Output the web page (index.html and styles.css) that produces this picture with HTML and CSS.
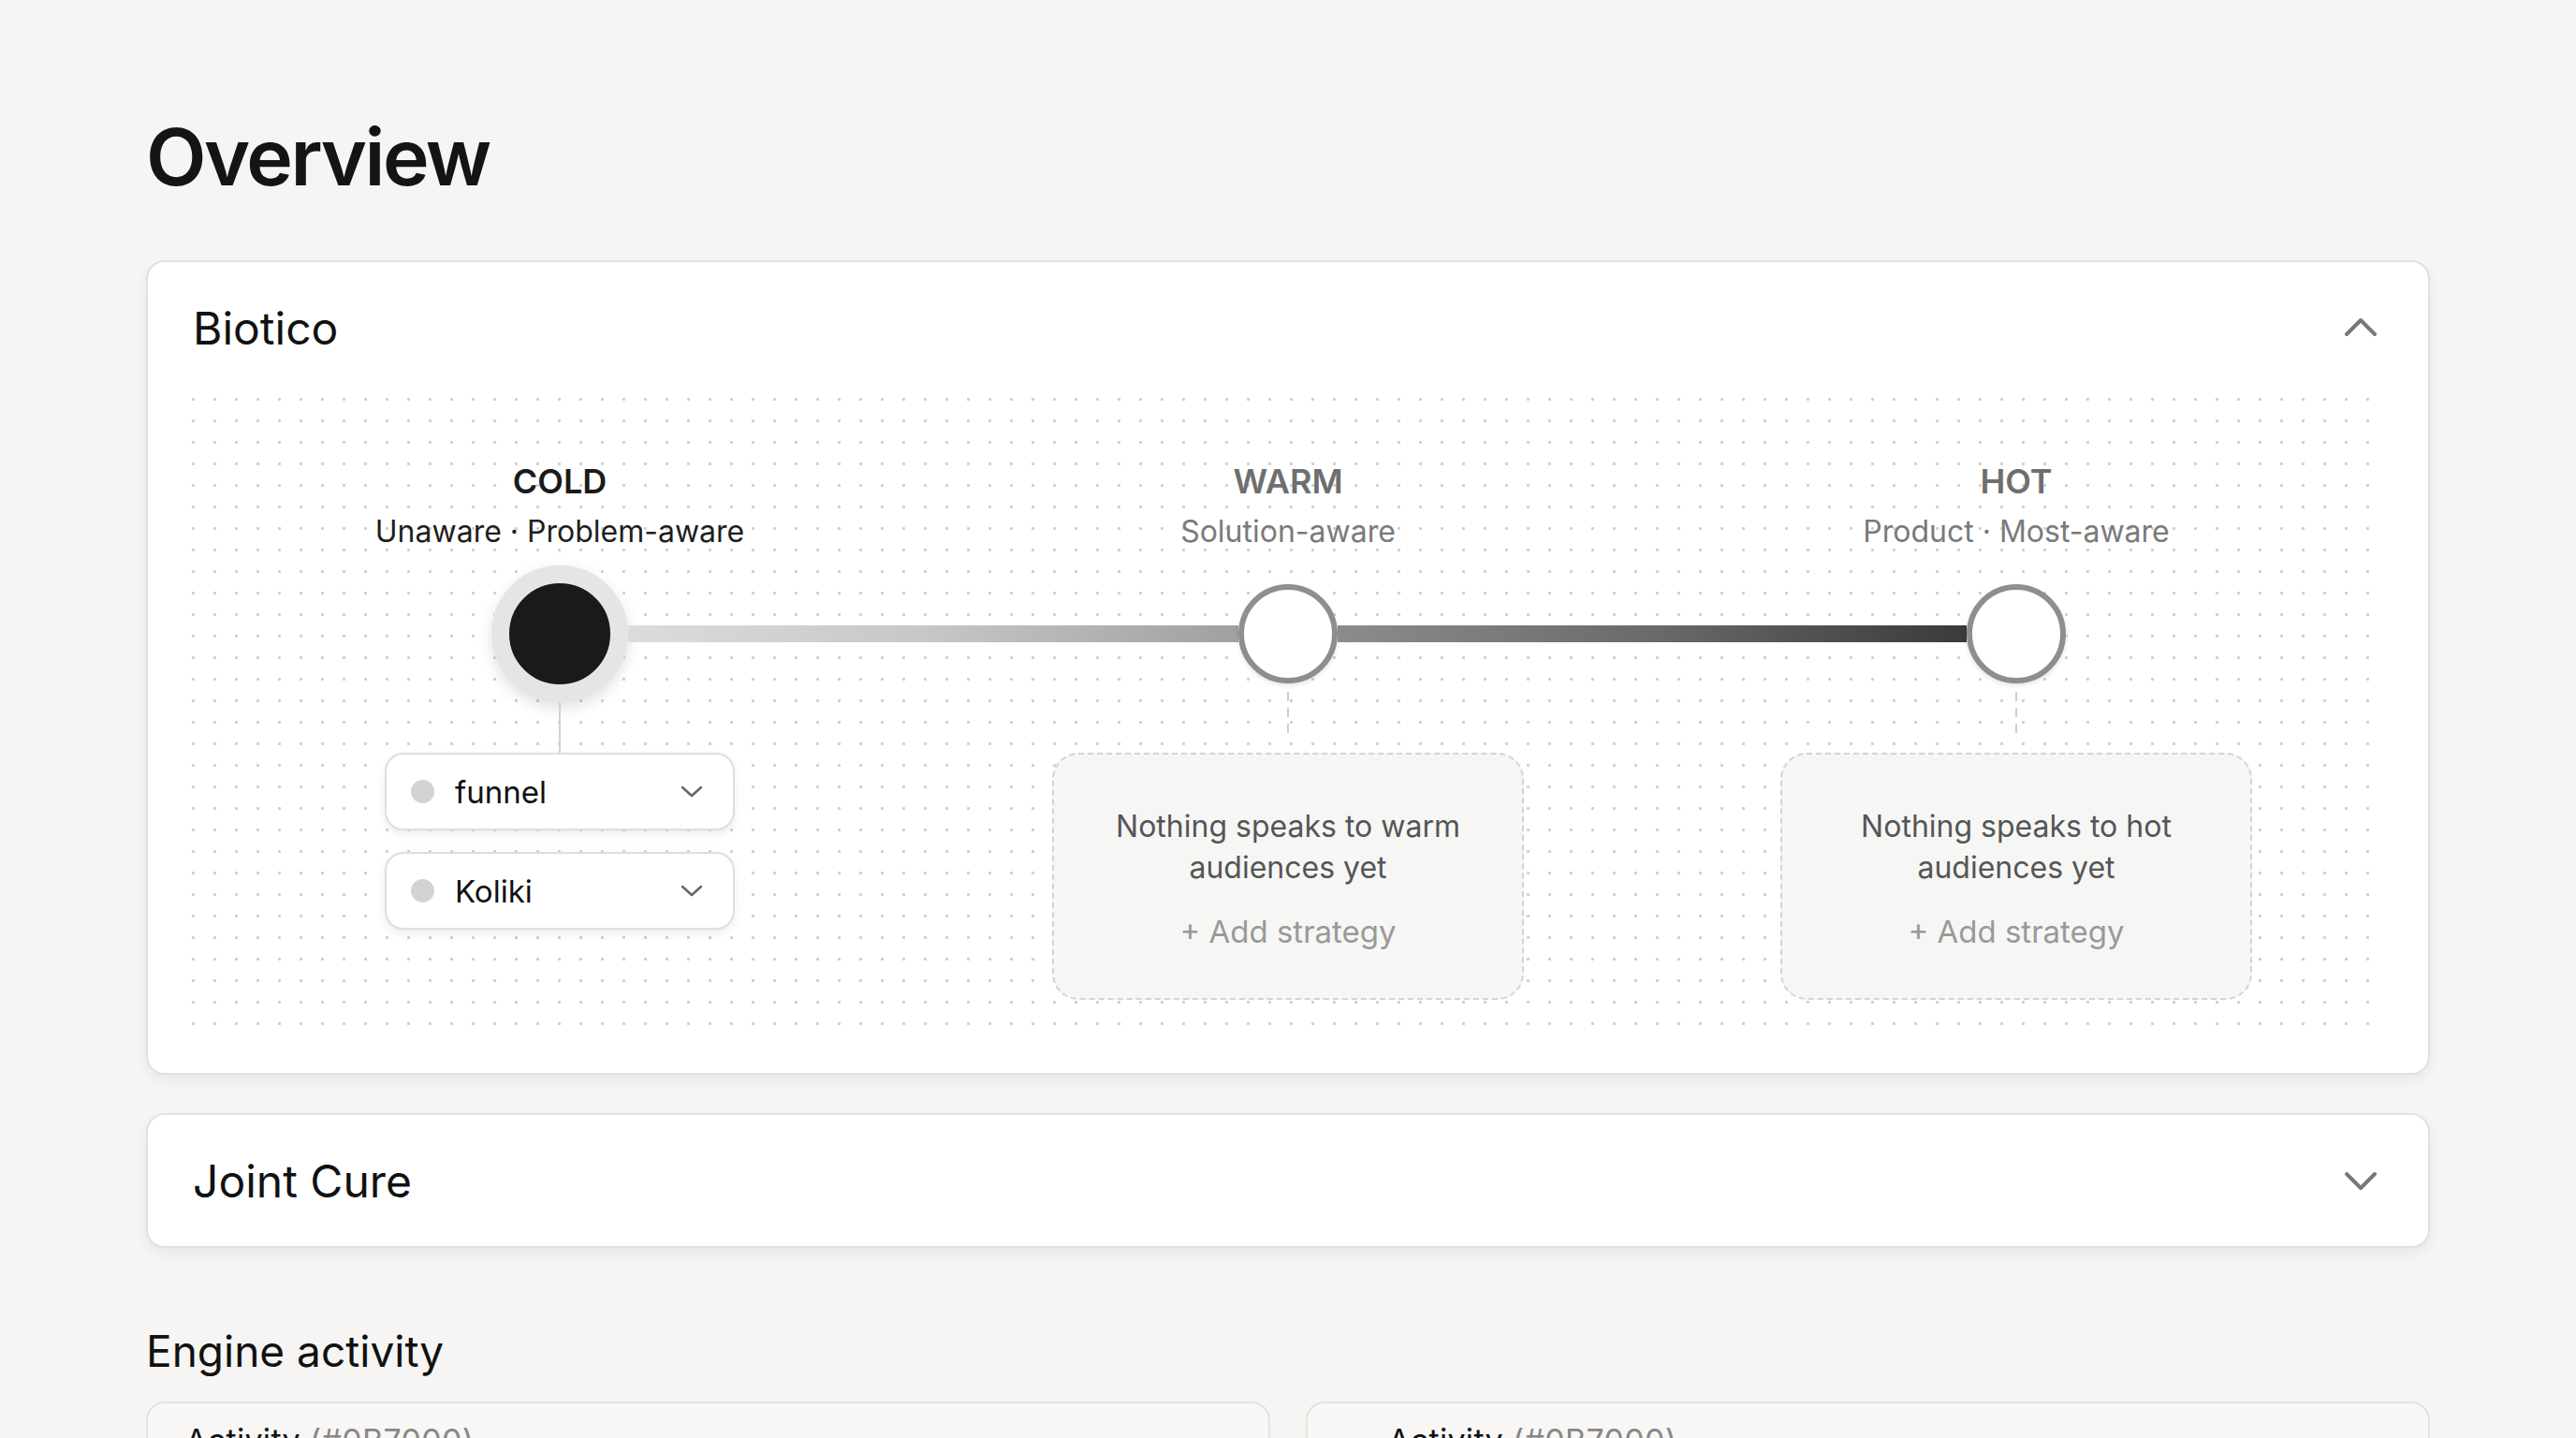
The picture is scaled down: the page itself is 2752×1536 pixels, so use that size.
FILE: index.html
```html
<!DOCTYPE html>
<html>

<head>
    <meta charset="utf-8">
    <title>Overview</title>
    <link rel="stylesheet" href="styles.css">
</head>

<body>
    <div class="page">
        <h1 class="page-title">Overview</h1>

        <section class="brand-card">
            <div class="brand-head">
                <h2>Biotico</h2>
                <svg class="head-chevron" width="40" height="40" viewBox="0 0 40 40">
                    <path d="M5 27 L20 12 L35 27" fill="none" stroke="#777" stroke-width="4" stroke-linecap="round" stroke-linejoin="round" />
                </svg>
            </div>
            <div class="funnel">
                <!-- cold -->
                <div class="stage">
                    <div class="stage-name">COLD</div>
                    <div class="stage-sub">Unaware · Problem-aware</div>
                    <div class="stage-track">
                        <span class="seg seg-none"></span>
                        <span class="node node-active"></span>
                        <span class="seg seg-a"></span>
                    </div>
                    <div class="link"></div>
                    <div class="picks">
                        <div class="pick">
                            <span class="pick-dot"></span>
                            <span class="pick-name">funnel</span>
                            <svg width="24" height="14" viewBox="0 0 24 14">
                                <path d="M2 2 L12 11 L22 2" fill="none" stroke="#666" stroke-width="2.5" stroke-linecap="round" stroke-linejoin="round" />
                            </svg>
                        </div>
                        <div class="pick">
                            <span class="pick-dot"></span>
                            <span class="pick-name">Koliki</span>
                            <svg width="24" height="14" viewBox="0 0 24 14">
                                <path d="M2 2 L12 11 L22 2" fill="none" stroke="#666" stroke-width="2.5" stroke-linecap="round" stroke-linejoin="round" />
                            </svg>
                        </div>
                    </div>
                </div>
                <!-- warm -->
                <div class="stage stage-off">
                    <div class="stage-name">WARM</div>
                    <div class="stage-sub">Solution-aware</div>
                    <div class="stage-track">
                        <span class="seg seg-b"></span>
                        <span class="node"></span>
                        <span class="seg seg-c"></span>
                    </div>
                    <div class="link link-dash"></div>
                    <div class="empty">
                        <p>Nothing speaks to warm<br>audiences yet</p>
                        <div class="add">+ Add strategy</div>
                    </div>
                </div>
                <!-- hot -->
                <div class="stage stage-off">
                    <div class="stage-name">HOT</div>
                    <div class="stage-sub">Product · Most-aware</div>
                    <div class="stage-track">
                        <span class="seg seg-d"></span>
                        <span class="node"></span>
                        <span class="seg seg-none"></span>
                    </div>
                    <div class="link link-dash"></div>
                    <div class="empty">
                        <p>Nothing speaks to hot<br>audiences yet</p>
                        <div class="add">+ Add strategy</div>
                    </div>
                </div>
            </div>
        </section>

        <section class="brand-card">
            <div class="brand-head">
                <h2>Joint Cure</h2>
                <svg class="head-chevron" width="40" height="40" viewBox="0 0 40 40">
                    <path d="M5 13 L20 28 L35 13" fill="none" stroke="#777" stroke-width="4" stroke-linecap="round" stroke-linejoin="round" />
                </svg>
            </div>
        </section>

        <h2 class="section-title">Engine activity</h2>
        <div class="activity">
            <div class="activity-card">
                <div class="activity-title">Activity <span>(#0B7000)</span></div>
            </div>
            <div class="activity-card activity-card-wide">
                <div class="activity-title">Activity <span>(#0B7000)</span></div>
            </div>
        </div>
    </div>
</body>

</html>
```

FILE: styles.css
```css
* {
    padding: 0;
    margin: 0;
    box-sizing: border-box;
}

html,
body {
    background-color: #f6f5f3;
    font-family: Inter, "Liberation Sans", sans-serif;
    color: #141414;
}

.page {
    width: 2440px;
    margin: 0 auto;
    padding-top: 118px;
}

.page-title {
    font-size: 84px;
    line-height: 100px;
    font-weight: 600;
    letter-spacing: -2.5px;
    margin-bottom: 60px;
}

.brand-card {
    background-color: #fff;
    border: 2px solid #e3e1de;
    border-radius: 20px;
    box-shadow: 0 6px 14px rgba(0, 0, 0, 0.06);
    margin-bottom: 41px;
}

.brand-head {
    height: 140px;
    display: flex;
    align-items: center;
    justify-content: space-between;
    padding: 0 52px 0 48px;
}

.brand-head h2 {
    font-size: 48px;
    font-weight: 400;
    color: #111;
}

.funnel {
    margin: 0 46px 48px;
    padding: 72px 5px 30px;
    display: grid;
    grid-template-columns: 1fr 1fr 1fr;
    align-items: start;
    background-image: radial-gradient(circle, #cfcfcf 1.3px, transparent 1.8px);
    background-size: 23px 23px;
    background-position: -9px -5px;
}

.stage {
    display: flex;
    flex-direction: column;
    align-items: center;
}

.stage-name {
    font-size: 36px;
    line-height: 44px;
    font-weight: 600;
    color: #1a1a1a;
}

.stage-sub {
    font-size: 32px;
    line-height: 40px;
    margin-top: 12px;
    color: #1e1e1e;
}

.stage-off .stage-name {
    color: #6e6e6e;
}

.stage-off .stage-sub {
    color: #7a7a7a;
}

.stage-track {
    width: 100%;
    height: 146px;
    margin-top: 16px;
    display: flex;
    align-items: center;
}

.seg {
    flex: 1;
    height: 18px;
}

.seg-none {
    visibility: hidden;
}

.seg-a {
    background: linear-gradient(to right, #dcdcdc, #c7c7c7);
}

.seg-b {
    background: linear-gradient(to right, #c7c7c7, #a0a0a0);
}

.seg-c {
    background: linear-gradient(to right, #8c8c8c, #6a6a6a);
}

.seg-d {
    background: linear-gradient(to right, #6a6a6a, #3a3a3a);
}

.node {
    width: 106px;
    height: 106px;
    border-radius: 50%;
    background-color: #fff;
    border: 6px solid #8e8e8f;
    box-shadow: 0 2px 5px rgba(0, 0, 0, 0.12);
}

.node-active {
    width: 146px;
    height: 146px;
    background-color: #1a1a1a;
    border: 19px solid #e5e5e5;
    box-shadow: 0 6px 16px rgba(0, 0, 0, 0.12);
}

.link {
    width: 2px;
    height: 54px;
    background-color: #d2d2d2;
}

.link-dash {
    height: 50px;
    margin-top: -11px;
    margin-bottom: 15px;
    background: repeating-linear-gradient(to bottom, #cfcfcf 0 10px, transparent 10px 17px);
}

.picks {
    display: flex;
    flex-direction: column;
    gap: 23px;
}

.pick {
    width: 374px;
    height: 83px;
    display: flex;
    align-items: center;
    padding: 0 32px 0 26px;
    background-color: #fff;
    border: 2px solid #dedede;
    border-radius: 20px;
    box-shadow: 0 4px 10px rgba(0, 0, 0, 0.08);
}

.pick-dot {
    width: 25px;
    height: 25px;
    border-radius: 50%;
    background-color: #d3d3d5;
    margin-right: 22px;
}

.pick-name {
    flex: 1;
    font-size: 33px;
    color: #111;
}

.empty {
    width: 504px;
    height: 264px;
    padding-top: 55px;
    text-align: center;
    background-color: #f6f6f5;
    border: 2px dashed #d3d3d3;
    border-radius: 28px;
}

.empty p {
    font-size: 32px;
    line-height: 44px;
    color: #555;
}

.add {
    margin-top: 24px;
    font-size: 33px;
    line-height: 44px;
    color: #999;
}

.section-title {
    font-size: 46px;
    line-height: 56px;
    font-weight: 400;
    color: #111;
    margin-top: 82px;
    margin-bottom: 26px;
}

.activity {
    display: grid;
    grid-template-columns: 1fr 1fr;
    gap: 38px;
}

.activity-card {
    height: 200px;
    background-color: #f8f7f5;
    border: 2px solid #e4e2df;
    border-radius: 20px;
    padding: 19px 40px;
}

.activity-card-wide {
    padding-left: 86px;
}

.activity-title {
    font-size: 34px;
    letter-spacing: 0.3px;
    color: #111;
}

.activity-title span {
    color: #888;
}
```
